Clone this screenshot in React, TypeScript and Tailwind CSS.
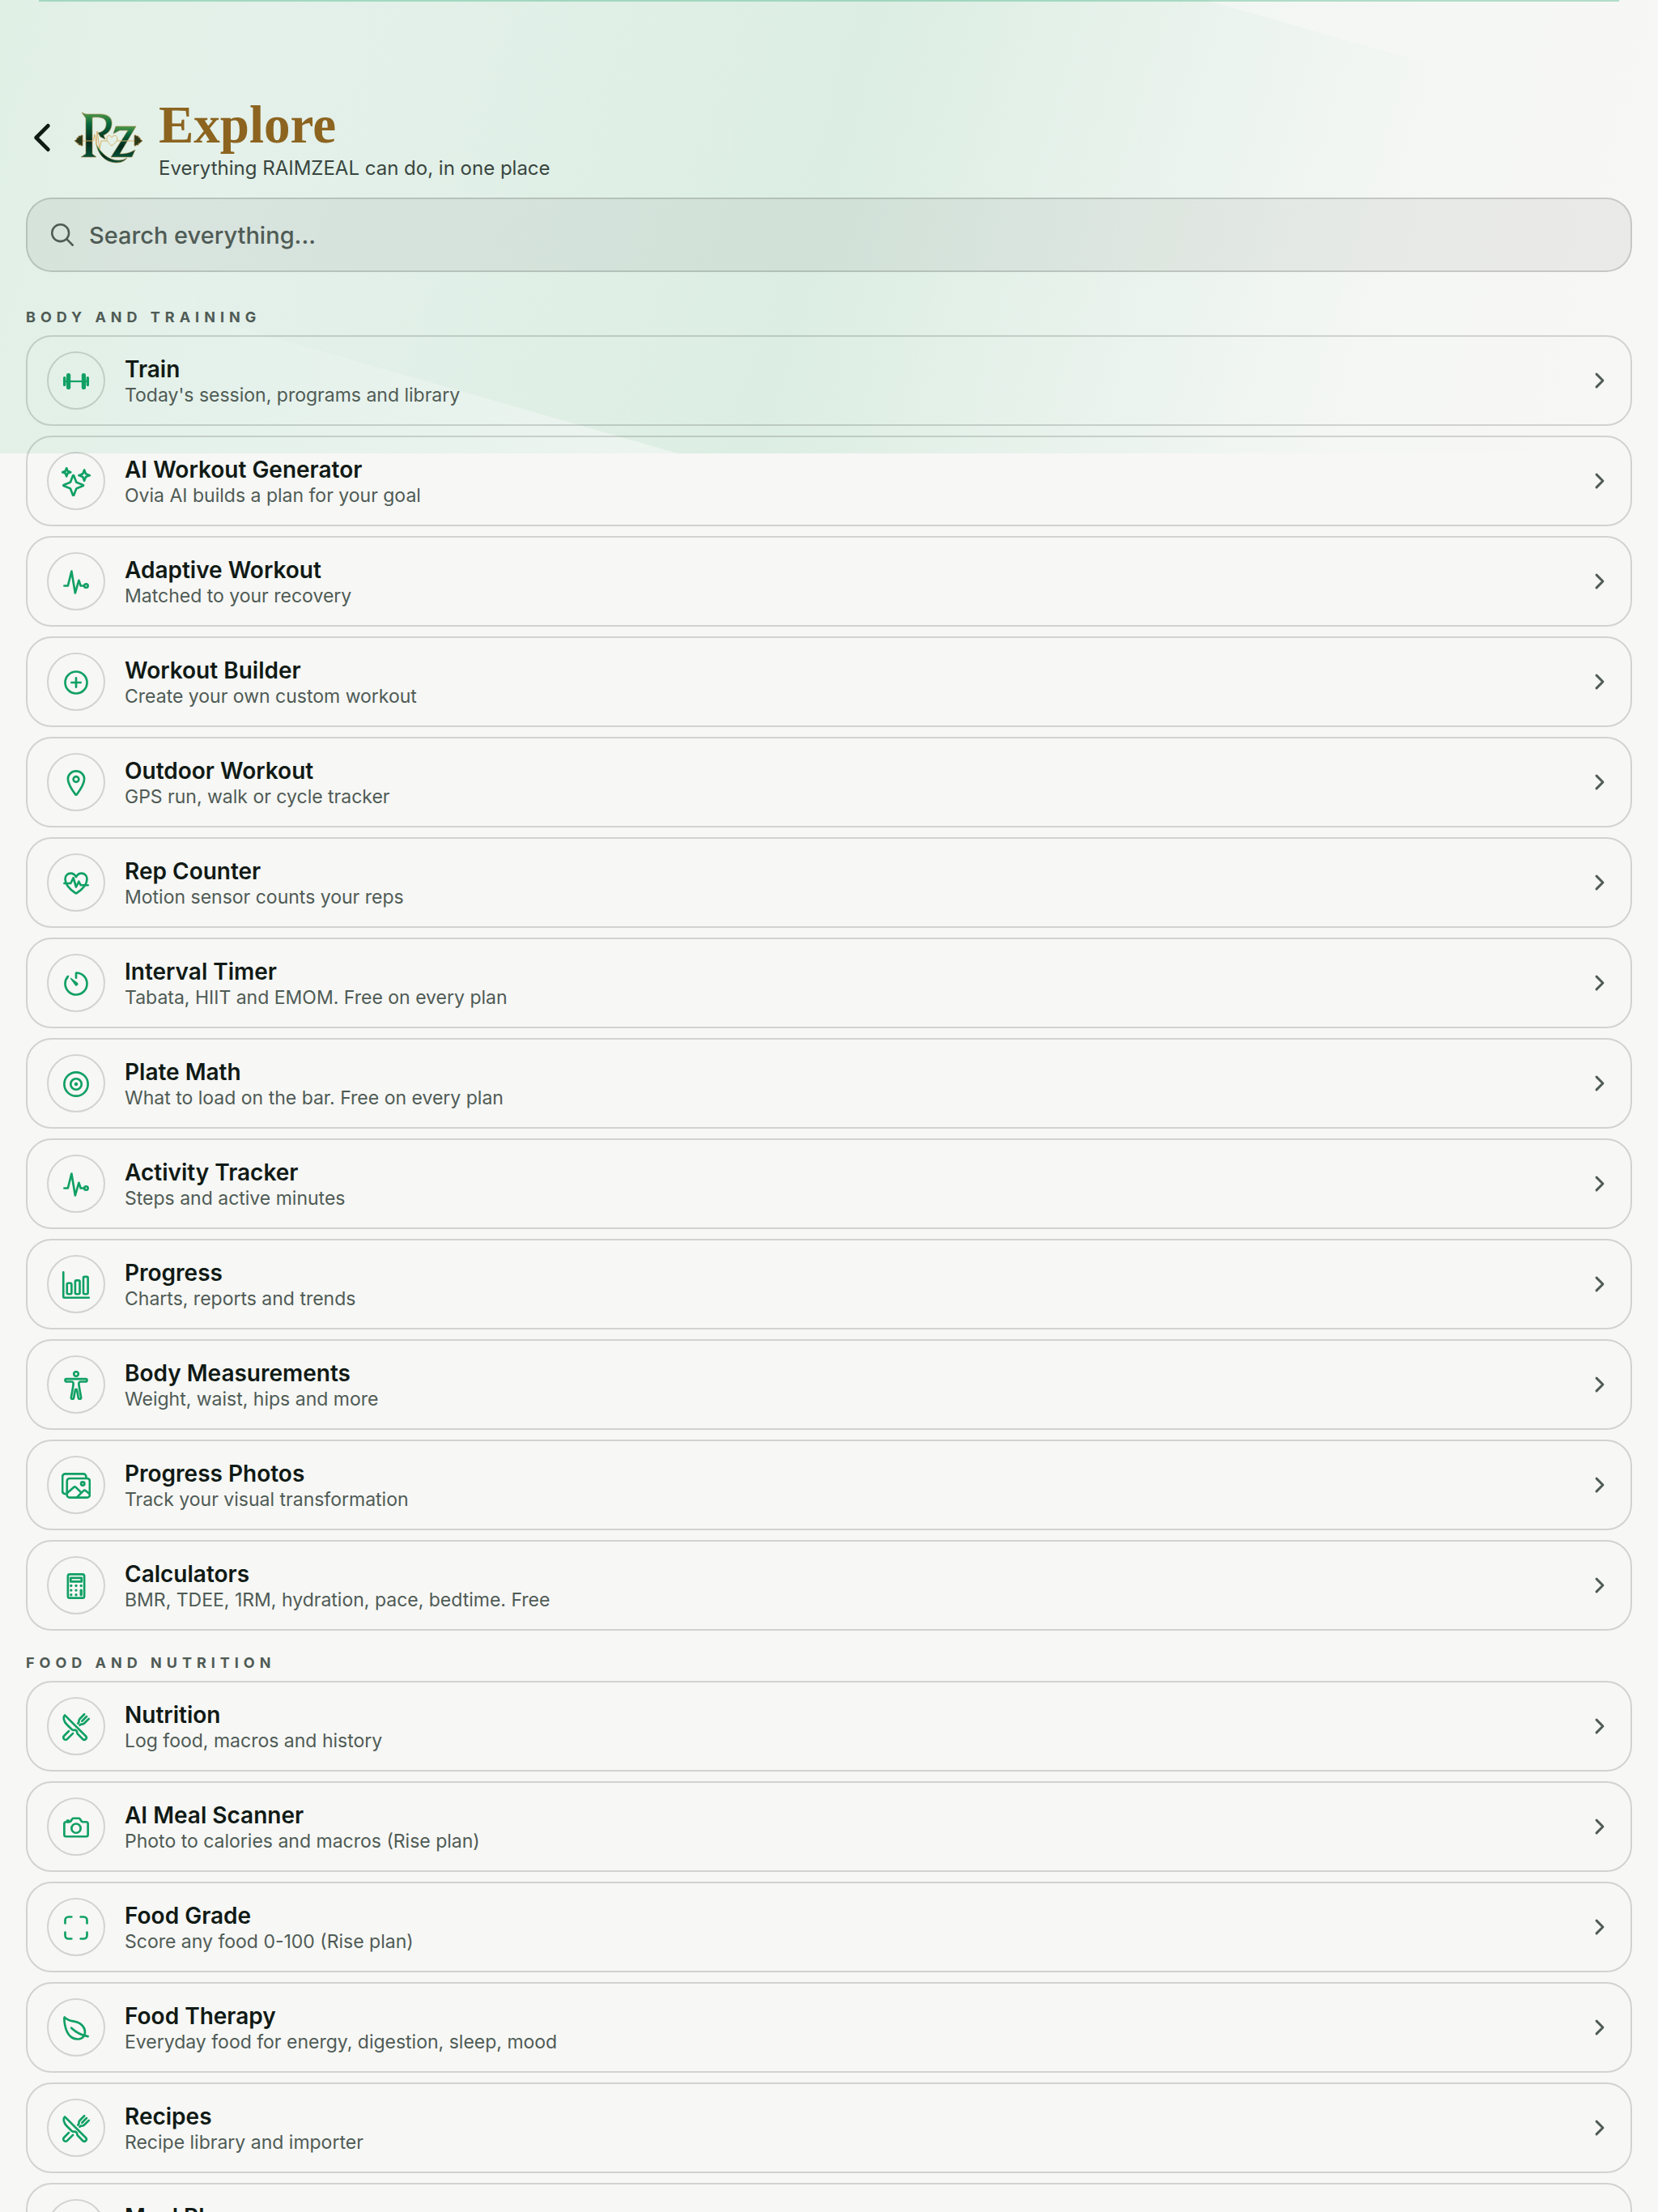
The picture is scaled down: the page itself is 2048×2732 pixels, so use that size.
import type { ComponentType } from 'react'
import {
  IoAddCircleOutline,
  IoBarChartOutline,
  IoBodyOutline,
  IoCalculatorOutline,
  IoCameraOutline,
  IoCalendarOutline,
  IoChevronBack,
  IoChevronForward,
  IoDiscOutline,
  IoFitnessOutline,
  IoImagesOutline,
  IoLeafOutline,
  IoLocationOutline,
  IoPulseOutline,
  IoRestaurantOutline,
  IoScanOutline,
  IoSearchOutline,
  IoSparklesOutline,
  IoTimerOutline,
} from 'react-icons/io5'

interface Feature {
  title: string
  subtitle: string
  icon: ComponentType<{ className?: string }>
}

interface Section {
  heading: string
  items: Feature[]
}

const BarbellIcon = ({ className }: { className?: string }) => (
  <svg viewBox="0 0 36 36" fill="currentColor" className={className} aria-hidden="true">
    <rect x="2" y="12" width="3.4" height="12" rx="1.5" />
    <rect x="6" y="8" width="5.2" height="20" rx="2.2" />
    <rect x="4" y="16.9" width="28" height="2.2" />
    <rect x="24.8" y="8" width="5.2" height="20" rx="2.2" />
    <rect x="30.6" y="12" width="3.4" height="12" rx="1.5" />
  </svg>
)

const sections: Section[] = [
  {
    heading: 'BODY AND TRAINING',
    items: [
      { title: 'Train', subtitle: "Today's session, programs and library", icon: BarbellIcon },
      { title: 'AI Workout Generator', subtitle: 'Ovia AI builds a plan for your goal', icon: IoSparklesOutline },
      { title: 'Adaptive Workout', subtitle: 'Matched to your recovery', icon: IoPulseOutline },
      { title: 'Workout Builder', subtitle: 'Create your own custom workout', icon: IoAddCircleOutline },
      { title: 'Outdoor Workout', subtitle: 'GPS run, walk or cycle tracker', icon: IoLocationOutline },
      { title: 'Rep Counter', subtitle: 'Motion sensor counts your reps', icon: IoFitnessOutline },
      { title: 'Interval Timer', subtitle: 'Tabata, HIIT and EMOM. Free on every plan', icon: IoTimerOutline },
      { title: 'Plate Math', subtitle: 'What to load on the bar. Free on every plan', icon: IoDiscOutline },
      { title: 'Activity Tracker', subtitle: 'Steps and active minutes', icon: IoPulseOutline },
      { title: 'Progress', subtitle: 'Charts, reports and trends', icon: IoBarChartOutline },
      { title: 'Body Measurements', subtitle: 'Weight, waist, hips and more', icon: IoBodyOutline },
      { title: 'Progress Photos', subtitle: 'Track your visual transformation', icon: IoImagesOutline },
      { title: 'Calculators', subtitle: 'BMR, TDEE, 1RM, hydration, pace, bedtime. Free', icon: IoCalculatorOutline },
    ],
  },
  {
    heading: 'FOOD AND NUTRITION',
    items: [
      { title: 'Nutrition', subtitle: 'Log food, macros and history', icon: IoRestaurantOutline },
      { title: 'AI Meal Scanner', subtitle: 'Photo to calories and macros (Rise plan)', icon: IoCameraOutline },
      { title: 'Food Grade', subtitle: 'Score any food 0-100 (Rise plan)', icon: IoScanOutline },
      { title: 'Food Therapy', subtitle: 'Everyday food for energy, digestion, sleep, mood', icon: IoLeafOutline },
      { title: 'Recipes', subtitle: 'Recipe library and importer', icon: IoRestaurantOutline },
      { title: 'Meal Plan', subtitle: 'Plan your meals for the week', icon: IoCalendarOutline },
    ],
  },
]

const Logo = () => (
  <svg viewBox="0 0 84 68" className="h-[68px] w-[84px]" aria-label="RAIMZEAL" role="img">
    <defs>
      <linearGradient id="emerald" x1="0" y1="0" x2="0" y2="1">
        <stop offset="0" stopColor="#4f9a48" />
        <stop offset="0.25" stopColor="#08693f" />
        <stop offset="0.65" stopColor="#03291b" />
        <stop offset="1" stopColor="#07543a" />
      </linearGradient>
    </defs>
    <g fill="url(#emerald)" stroke="#a98546" strokeWidth="0.6" strokeLinejoin="round">
      <path d="M9 3 L14 5 H32 C42 5 47 10 46 18 C45 25 41 29 36 31 L38 36 L32 33 L29 28 C36 27 40 22 39 15 C38 10 33 8 22 9 V54 L27 58 H8 L14 54 V10 Z" />
      <path d="M27 42 C33 54 43 62 54 62 C59 62 62 61 65 59 C60 66 50 66 42 63 C33 59 28 50 27 42 Z" />
      <path d="M51 20 H76 L56 54 C65 54 70 52 75 49 L71 58 H45 L66 25 H56 L48 29 Z" />
    </g>
    <g fill="none" stroke="#d9b169" strokeWidth="1" strokeLinejoin="round">
      <path d="M9 38 H23 L25 30 L27 43 L28 26 L31 48 L33 38 H40 M52 38 H75" />
      <path d="M46 44 C42 41 40 38 40 35 C40 31 44 30 46 34 C48 30 53 31 53 35 C53 38 50 41 46 44 Z" />
    </g>
    <path
      d="M0 38 L3 36 V34 H5 V32 H8 V31 H10 V44 H8 V43 H5 V41 H3 V40 Z M84 38 L81 36 V34 H79 V32 H76 V31 H74 V44 H76 V43 H79 V41 H81 V40 Z"
      fill="#2b3a1c"
      stroke="#9a7a3c"
      strokeWidth="0.8"
    />
  </svg>
)

const Backdrop = () => (
  <div className="pointer-events-none absolute inset-x-0 top-0 h-[560px] overflow-hidden" aria-hidden="true">
    <div className="absolute inset-0 bg-[linear-gradient(105deg,#e1f0e5_0%,#e5f1eb_18%,#ebf4ee_40%,#f4f7f4_75%,#f7f7f5_97%)]" />
    <div className="absolute top-[-119px] left-[-10%] h-[718px] w-[120%] rotate-16 bg-[linear-gradient(90deg,transparent_20%,rgba(16,155,85,0.08)_50%,transparent_80%)]" />
    <div className="absolute inset-x-12 top-0 h-0.5 bg-[#10a064]/30" />
  </div>
)

const FeatureRow = ({ title, subtitle, icon: Icon }: Feature) => (
  <button type="button" className="flex w-full items-center gap-6 rounded-4xl border-2 border-black/15 px-6 py-[18px] text-left">
    <span className="flex size-18 shrink-0 items-center justify-center rounded-full border-2 border-black/15 pt-0.5">
      <Icon className="size-9 text-[#10a064] [&_[fill=none]]:stroke-[38px]" />
    </span>
    <span className="flex flex-1 flex-col pt-1">
      <span className="text-[28px] leading-8 font-semibold text-[#101a15]">{title}</span>
      <span className="text-[23px] leading-8 text-[#4f5b55]">{subtitle}</span>
    </span>
    <IoChevronForward className="size-7 text-[#4f5b55] [&_[fill=none]]:stroke-[54px]" />
  </button>
)

const App = () => (
  <div className="relative h-screen overflow-y-auto bg-[#f7f7f5] font-['Inter',sans-serif] [scrollbar-width:none]">
    <Backdrop />
    <div className="relative px-8 pt-[116px]">
      <header className="flex items-center gap-3">
        <button type="button" aria-label="Back" className="-ml-2 flex size-14 items-center justify-center">
          <IoChevronBack className="size-13 text-[#101a15]" />
        </button>
        <Logo />
        <div className="ml-2">
          <h1 className="font-['Liberation_Serif',serif] text-[65px] leading-[76px] font-bold text-[#8c6420]">Explore</h1>
          <p className="text-[24px] leading-8 text-[#39463f]">Everything RAIMZEAL can do, in one place</p>
        </div>
      </header>

      <label className="mt-5 flex h-[92px] items-center gap-4 rounded-4xl border-2 border-black/15 bg-black/5 px-[26px]">
        <IoSearchOutline className="size-[34px] text-[#4f5b55] [&_[fill=none]]:stroke-[38px]" />
        <input
          type="search"
          aria-label="Search everything"
          placeholder="Search everything..."
          className="flex-1 bg-transparent pt-0.5 text-[29px] font-medium outline-none placeholder:text-[#4f5b55]"
        />
      </label>

      <div className="mt-11 flex flex-col gap-7">
        {sections.map(section => (
          <section key={section.heading}>
            <h2 className="mb-2.5 text-[18px] leading-6 font-bold tracking-[6px] text-[#4f5b55]">{section.heading}</h2>
            <div className="flex flex-col gap-3">
              {section.items.map(item => <FeatureRow key={item.title} {...item} />)}
            </div>
          </section>
        ))}
      </div>
    </div>
  </div>
)

export default App
